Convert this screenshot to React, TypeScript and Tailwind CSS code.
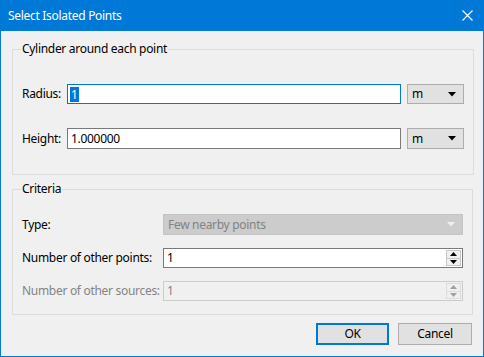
import { ReactNode } from 'react';

const font = { fontFamily: '"Segoe UI", "Noto Sans", sans-serif' };

const Caret = ({ color = '#000' }: { color?: string }) => (
  <svg width="8" height="5" viewBox="0 0 8 5">
    <path d="M0 0 H8 L4 4.5 Z" fill={color} />
  </svg>
);

const Spin = ({ disabled }: { disabled?: boolean }) => {
  const c = disabled ? '#a0a0a0' : '#000';
  const b = disabled ? 'border-[#dcdcdc]' : 'border-[#c8c8c8]';
  return (
    <div className="flex flex-col w-[15px] h-[16px] mr-[1px]">
      <div className={`flex-1 flex items-center justify-center border ${b} bg-[#f0f0f0]`}>
        <svg width="7" height="4" viewBox="0 0 7 4">
          <path d="M0 4 H7 L3.5 0 Z" fill={c} />
        </svg>
      </div>
      <div className={`flex-1 flex items-center justify-center border border-t-0 ${b} bg-[#f0f0f0]`}>
        <svg width="7" height="4" viewBox="0 0 7 4">
          <path d="M0 0 H7 L3.5 4 Z" fill={c} />
        </svg>
      </div>
    </div>
  );
};

const Group = ({ title, children, className }: { title: string; children: ReactNode; className?: string }) => (
  <fieldset className={`border border-[#dcdcdc] px-[9px] ${className ?? ''}`}>
    <legend className="px-px -ml-px leading-4 text-[12px] text-black">{title}</legend>
    {children}
  </fieldset>
);

export default function App() {
  return (
    <div
      className="w-[484px] h-[357px] flex flex-col bg-[#f0f0f0] border-x border-b border-[#0078d7] text-[12px] tracking-[-0.3px] whitespace-nowrap text-black"
      style={font}
    >
      {/* Title bar */}
      <div className="h-[31px] shrink-0 bg-[#0078d7] flex items-center justify-between pl-[8px] pr-[10px] -mx-px">
        <span className="text-white text-[12px]">Select Isolated Points</span>
        <svg width="11" height="11" viewBox="0 0 11 11" className="mr-[1px]">
          <path d="M0.5 0.5 L10.5 10.5 M10.5 0.5 L0.5 10.5" stroke="#fff" strokeWidth="1.2" />
        </svg>
      </div>

      <div className="flex-1 flex flex-col pl-[11px] pr-[11px] pt-[10px]">
        <Group title="Cylinder around each point" className="h-[134px]">
          <div className="flex items-center mt-[27px] h-[20px]">
            <span className="w-[45px]">Radius:</span>
            <div className="w-[334px] h-[20px] border border-[#0078d7] bg-white flex items-center pl-[2px]">
              <span className="bg-[#0078d7] text-white px-px leading-[15px]">1</span>
            </div>
            <div className="ml-[6px] w-[57px] h-[20px] border border-[#adadad] bg-[#e1e1e1] flex items-center justify-between pl-[4px] pr-[7px]">
              <span>m</span>
              <Caret />
            </div>
          </div>
          <div className="flex items-center mt-[24px] h-[21px]">
            <span className="w-[45px]">Height:</span>
            <div className="w-[334px] h-[21px] border border-[#7a7a7a] bg-white flex items-center pl-[3px]">
              1.000000
            </div>
            <div className="ml-[6px] w-[57px] h-[21px] border border-[#adadad] bg-[#e1e1e1] flex items-center justify-between pl-[4px] pr-[7px]">
              <span>m</span>
              <Caret />
            </div>
          </div>
        </Group>

        <Group title="Criteria" className="h-[134px] mt-[6px]">
          <div className="flex items-center mt-[17px] h-[21px]">
            <span className="w-[141px]">Type:</span>
            <div className="w-[300px] h-[21px] border border-[#c4c4c4] bg-[#cccccc] text-[#838383] flex items-center justify-between pl-[4px] pr-[7px]">
              <span>Few nearby points</span>
              <Caret color="#f0f0f0" />
            </div>
          </div>
          <div className="flex items-center mt-[13px] h-[20px]">
            <span className="w-[141px]">Number of other points:</span>
            <div className="w-[300px] h-[20px] border border-[#7a7a7a] bg-white flex items-center justify-between pl-[3px]">
              <span>1</span>
              <Spin />
            </div>
          </div>
          <div className="flex items-center mt-[13px] h-[20px] text-[#838383]">
            <span className="w-[141px]">Number of other sources:</span>
            <div className="w-[300px] h-[20px] border border-[#cccccc] bg-[#f0f0f0] flex items-center justify-between pl-[3px]">
              <span>1</span>
              <Spin disabled />
            </div>
          </div>
        </Group>

        <div className="flex justify-end gap-[9px] mt-[8px]">
          <button className="w-[73px] h-[22px] border-2 border-[#0078d7] bg-[#e1e1e1] text-[12px]">OK</button>
          <button className="w-[74px] h-[22px] border border-[#adadad] bg-[#e1e1e1] text-[12px]">Cancel</button>
        </div>
      </div>
    </div>
  );
}
